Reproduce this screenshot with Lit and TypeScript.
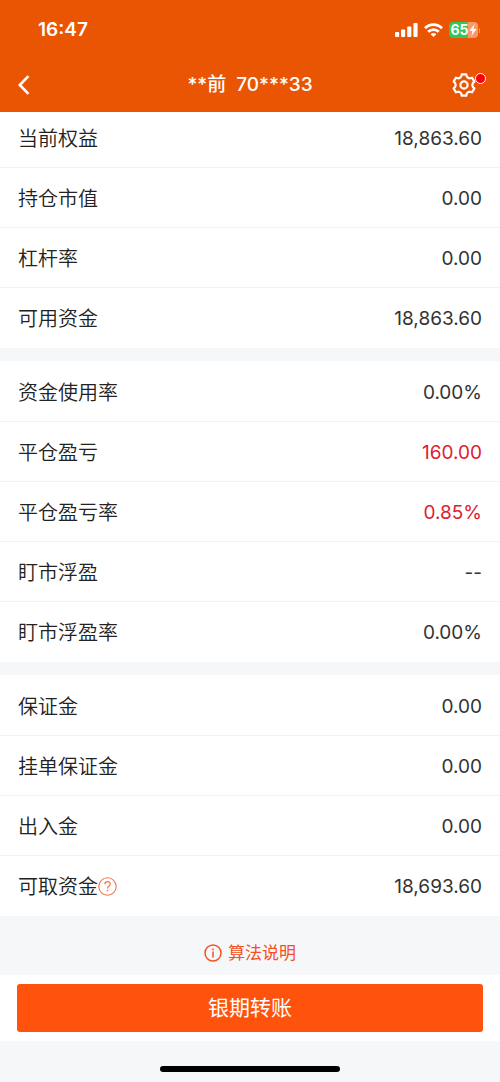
import { LitElement, html, css, svg, nothing } from "lit";
import { customElement, property } from "lit/decorators.js";
import { classMap } from "lit/directives/class-map.js";

interface Entry {
  label: string;
  value: string;
  gain?: boolean;
  help?: boolean;
}

const GROUPS: Entry[][] = [
  [
    { label: "当前权益", value: "18,863.60" },
    { label: "持仓市值", value: "0.00" },
    { label: "杠杆率", value: "0.00" },
    { label: "可用资金", value: "18,863.60" },
  ],
  [
    { label: "资金使用率", value: "0.00%" },
    { label: "平仓盈亏", value: "160.00", gain: true },
    { label: "平仓盈亏率", value: "0.85%", gain: true },
    { label: "盯市浮盈", value: "--" },
    { label: "盯市浮盈率", value: "0.00%" },
  ],
  [
    { label: "保证金", value: "0.00" },
    { label: "挂单保证金", value: "0.00" },
    { label: "出入金", value: "0.00" },
    { label: "可取资金", value: "18,693.60", help: true },
  ],
];

// Six-toothed gear outline centred on (12, 12), with hollows curved inward.
function gearPath(): string {
  const at = (deg: number, r: number) => {
    const a = (deg * Math.PI) / 180;
    return `${(12 + r * Math.cos(a)).toFixed(2)} ${(12 + r * Math.sin(a)).toFixed(2)}`;
  };
  let d = "";
  for (let i = 0; i < 6; i++) {
    const c = i * 60 - 90;
    d += `${i ? "L" : "M"}${at(c - 12, 10.9)}L${at(c + 12, 10.9)}L${at(c + 17, 9.2)}Q${at(c + 30, 7.6)} ${at(c + 43, 9.2)}`;
  }
  return `${d}Z`;
}

@customElement("status-bar")
export class StatusBar extends LitElement {
  static styles = css`
    :host {
      display: flex;
      align-items: center;
      justify-content: space-between;
      height: 60px;
      box-sizing: border-box;
      padding: 0 20px 0 38px;
      color: #fff;
    }
    .time {
      font-size: 19px;
      font-weight: 600;
      line-height: 24px;
    }
    .icons {
      display: flex;
      align-items: center;
      gap: 6px;
    }
    .icons svg {
      display: block;
    }
    .battery {
      display: flex;
      align-items: center;
      gap: 1px;
    }
    .cell {
      display: flex;
      align-items: center;
      justify-content: center;
      width: 29px;
      height: 16px;
      border-radius: 4px;
      background: linear-gradient(90deg, #34c759 65%, #f79a6b 65%);
      font-size: 14px;
      font-weight: 700;
      line-height: 16px;
    }
    .cap {
      width: 1px;
      height: 5px;
      border-radius: 1px;
      background: #f79a6b;
    }
  `;

  render() {
    return html`
      <span class="time">16:47</span>
      <span class="icons">
        <svg width="23" height="14" viewBox="0 0 23 14" fill="#fff" aria-hidden="true">
          <rect x="0" y="9" width="4.2" height="5" rx="1" />
          <rect x="6" y="6.5" width="4.2" height="7.5" rx="1" />
          <rect x="12.2" y="3.5" width="4.2" height="10.5" rx="1" />
          <rect x="18.4" y="0" width="4.2" height="14" rx="1" />
        </svg>
        <svg width="19" height="14" viewBox="0 0 19 14" fill="none" stroke="#fff" stroke-width="2.8" aria-hidden="true">
          <path d="M1 5.2C5.8 0.4 13.2 0.4 18 5.2" />
          <path d="M4.2 8.8C7.2 5.8 11.8 5.8 14.8 8.8" />
          <path d="M6.6 11.2C8.3 9.6 10.7 9.6 12.4 11.2L9.5 14Z" fill="#fff" stroke="none" />
        </svg>
        <span class="battery">
          <span class="cell">
            65
            <svg width="8" height="12" viewBox="0 0 8 12" fill="#fff" aria-hidden="true">
              <path d="M5.6 0L0.4 6.8H3.5L2.4 12L7.6 5H4.5Z" />
            </svg>
          </span>
          <span class="cap"></span>
        </span>
      </span>
    `;
  }
}

@customElement("fund-group")
export class FundGroup extends LitElement {
  @property({ attribute: false }) entries: Entry[] = [];

  static styles = css`
    :host {
      display: block;
      background: #fff;
      padding-top: 1px;
    }
    .list {
      margin: 0;
    }
    .row {
      display: flex;
      align-items: center;
      justify-content: space-between;
      height: 60px;
      box-sizing: border-box;
      padding: 2px 18px 0;
      border-bottom: 1px solid #f1f2f4;
      font-size: 20px;
      line-height: 28px;
    }
    .row:last-child {
      border-bottom-color: transparent;
    }
    .label {
      display: flex;
      align-items: center;
      color: #222;
      font-weight: 350;
    }
    .value {
      margin: 0;
      color: #333;
      font-size: 19px;
    }
    .gain {
      color: #e0202f;
    }
    .help {
      display: block;
      padding: 0;
      border: 0;
      background: none;
      cursor: pointer;
    }
    .help svg {
      display: block;
    }
  `;

  render() {
    return html`
      <dl class="list">
        ${this.entries.map(
          (e) => html`
            <div class="row">
              <dt class="label">
                ${e.label}
                ${e.help
                  ? html`<button class="help" type="button" aria-label="可取资金说明">
                      <svg width="19" height="19" viewBox="0 0 19 19" fill="none" stroke="#f8764a" stroke-width="1.1">
                        <circle cx="9.5" cy="9.5" r="8.7" />
                        <path d="M6.9 7.2C6.9 3.6 12.2 3.8 12.2 7C12.2 9 9.5 9.1 9.5 11.6" stroke-width="1.3" />
                        <path d="M9.5 12.9V14.3" stroke-width="1.4" />
                      </svg>
                    </button>`
                  : nothing}
              </dt>
              <dd class=${classMap({ value: true, gain: !!e.gain })}>${e.value}</dd>
            </div>
          `
        )}
      </dl>
    `;
  }
}

@customElement("app-root")
export class AppRoot extends LitElement {
  static styles = css`
    :host {
      display: flex;
      flex-direction: column;
      min-height: 100vh;
      background: #f6f7f9;
      font-family: Inter, "Noto Sans CJK SC", sans-serif;
    }
    .header {
      background: #ea5504;
      color: #fff;
    }
    .nav {
      display: grid;
      grid-template-columns: 48px 1fr 48px;
      align-items: center;
      height: 52px;
      box-sizing: border-box;
      padding-bottom: 3px;
    }
    .title {
      margin: 0;
      font-size: 19px;
      font-weight: 500;
      line-height: 28px;
      text-align: center;
      white-space: pre;
    }
    .icon {
      position: relative;
      display: block;
      padding: 0;
      border: 0;
      background: none;
      color: #fff;
      cursor: pointer;
    }
    .icon svg {
      display: block;
    }
    .back {
      justify-self: start;
      margin-left: 18px;
    }
    .settings {
      justify-self: start;
    }
    .dot {
      position: absolute;
      top: 0;
      right: -10px;
      width: 9px;
      height: 9px;
      border: 1px solid #fff;
      border-radius: 50%;
      background: #f5000f;
    }
    .content {
      display: flex;
      flex: 1;
      flex-direction: column;
      gap: 13px;
      overflow: hidden;
    }
    .scrolled {
      margin-top: -4px;
      padding-top: 0;
    }
    .note {
      display: flex;
      justify-content: center;
      padding: 12px 0 9px;
    }
    .link {
      display: flex;
      align-items: center;
      gap: 6px;
      color: #f4511e;
      font-size: 17px;
      line-height: 24px;
      text-decoration: none;
    }
    .actions {
      padding: 9px 17px;
      background: #fff;
    }
    .transfer {
      display: block;
      width: 100%;
      height: 48px;
      padding: 0;
      border: 0;
      border-radius: 3px;
      background: #ff520d;
      color: #fff;
      font-family: inherit;
      font-size: 21px;
      line-height: 28px;
      cursor: pointer;
    }
    .home {
      display: flex;
      justify-content: center;
      padding: 25px 0 10px;
    }
    .indicator {
      width: 36%;
      height: 6px;
      border-radius: 3px;
      background: #000;
    }
  `;

  render() {
    return html`
      <header class="header">
        <status-bar></status-bar>
        <nav class="nav">
          <button class="icon back" type="button" aria-label="返回">
            <svg width="12" height="20" viewBox="0 0 12 20" fill="none" stroke="currentColor" stroke-width="2.6">
              <path d="M10.4 1.2L1.8 10L10.4 18.8" />
            </svg>
          </button>
          <h1 class="title">**前  70***33</h1>
          <button class="icon settings" type="button" aria-label="设置">
            <svg width="24" height="24" viewBox="0 0 24 24" fill="none" stroke="currentColor" stroke-width="2.2" stroke-linejoin="round">
              ${svg`<path d=${gearPath()} />`}
              <circle cx="12" cy="12" r="3.6" />
            </svg>
            <span class="dot"></span>
          </button>
        </nav>
      </header>
      <main class="content">
        ${GROUPS.map(
          (entries, i) => html`<fund-group class=${classMap({ scrolled: i === 0 })} .entries=${entries}></fund-group>`
        )}
        <div class="note">
          <a class="link" href="#algorithm">
            <svg width="18" height="18" viewBox="0 0 18 18" fill="none" stroke="currentColor" stroke-width="1.5" aria-hidden="true">
              <circle cx="9" cy="9" r="8" />
              <path d="M9 7.6V13.6M9 4.4V6.2" />
            </svg>
            算法说明
          </a>
        </div>
      </main>
      <footer>
        <div class="actions">
          <button class="transfer" type="button">银期转账</button>
        </div>
        <div class="home"><span class="indicator"></span></div>
      </footer>
    `;
  }
}
